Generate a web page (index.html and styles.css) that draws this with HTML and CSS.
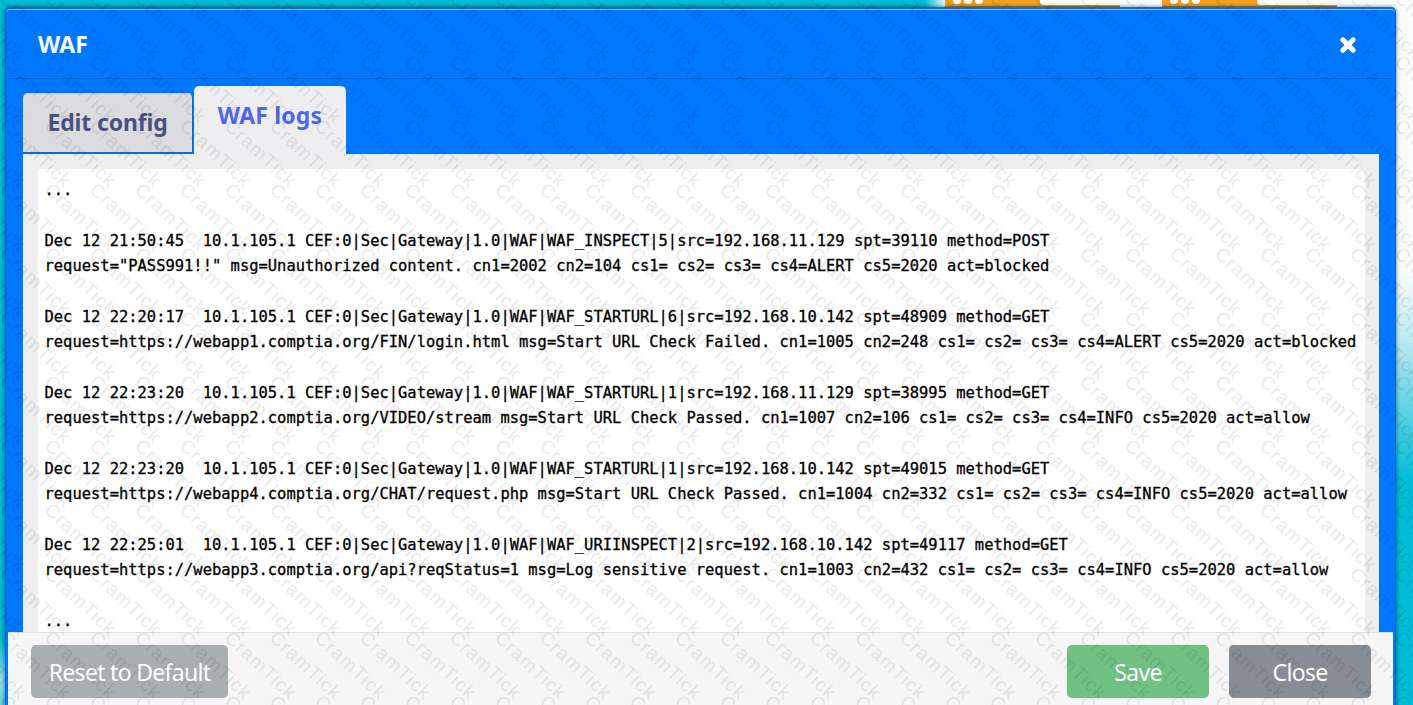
FILE: index.html
```html
<!DOCTYPE html>
<html lang="en">
<head>
<meta charset="utf-8">
<title>WAF</title>
<link rel="stylesheet" href="styles.css">
</head>
<body>
<div class="chips">
  <div class="chip"><span class="dots"><i></i><i></i><i></i></span><span class="pill"></span></div>
  <div class="chip"><span class="dots"><i></i><i></i><i></i></span><span class="pill"></span></div>
</div>
<section class="modal">
  <header class="modal-head">
    <h1 class="modal-title">WAF</h1>
    <svg class="close-x" width="18" height="18" viewBox="0 0 18 18" aria-hidden="true"><path d="M3.8 3.8 14.2 14.2M14.2 3.8 3.8 14.2" stroke="#fff" stroke-width="5" stroke-linecap="round" fill="none"/></svg>
  </header>
  <nav class="tabs">
    <div class="tab tab-off">Edit config</div>
    <div class="tab tab-on">WAF logs</div>
  </nav>
  <div class="panel">
    <pre class="log">...

Dec 12 21:50:45  10.1.105.1 CEF:0|Sec|Gateway|1.0|WAF|WAF_INSPECT|5|src=192.168.11.129 spt=39110 method=POST
request="PASS991!!" msg=Unauthorized content. cn1=2002 cn2=104 cs1= cs2= cs3= cs4=ALERT cs5=2020 act=blocked

Dec 12 22:20:17  10.1.105.1 CEF:0|Sec|Gateway|1.0|WAF|WAF_STARTURL|6|src=192.168.10.142 spt=48909 method=GET
request=https://webapp1.comptia.org/FIN/login.html msg=Start URL Check Failed. cn1=1005 cn2=248 cs1= cs2= cs3= cs4=ALERT cs5=2020 act=blocked

Dec 12 22:23:20  10.1.105.1 CEF:0|Sec|Gateway|1.0|WAF|WAF_STARTURL|1|src=192.168.11.129 spt=38995 method=GET
request=https://webapp2.comptia.org/VIDEO/stream msg=Start URL Check Passed. cn1=1007 cn2=106 cs1= cs2= cs3= cs4=INFO cs5=2020 act=allow

Dec 12 22:23:20  10.1.105.1 CEF:0|Sec|Gateway|1.0|WAF|WAF_STARTURL|1|src=192.168.10.142 spt=49015 method=GET
request=https://webapp4.comptia.org/CHAT/request.php msg=Start URL Check Passed. cn1=1004 cn2=332 cs1= cs2= cs3= cs4=INFO cs5=2020 act=allow

Dec 12 22:25:01  10.1.105.1 CEF:0|Sec|Gateway|1.0|WAF|WAF_URIINSPECT|2|src=192.168.10.142 spt=49117 method=GET
request=https://webapp3.comptia.org/api?reqStatus=1 msg=Log sensitive request. cn1=1003 cn2=432 cs1= cs2= cs3= cs4=INFO cs5=2020 act=allow

...</pre>
  </div>
  <footer class="modal-foot">
    <button class="btn btn-reset">Reset to Default</button>
    <span class="foot-gap"></span>
    <button class="btn btn-save">Save</button>
    <button class="btn btn-close">Close</button>
  </footer>
</section>
<svg class="watermark" width="1413" height="705" aria-hidden="true">
  <defs>
    <text id="wm" class="wm-text" transform="translate(-1.6 -0.7) rotate(43)">CramTick</text>
    <pattern id="wm-tile" width="45" height="64" patternUnits="userSpaceOnUse">
      <use href="#wm"/>
      <use href="#wm" transform="translate(-45 0)"/>
      <use href="#wm" transform="translate(45 0)"/>
      <use href="#wm" transform="translate(0 -64)"/>
      <use href="#wm" transform="translate(-45 -64)"/>
      <use href="#wm" transform="translate(45 -64)"/>
      <use href="#wm" transform="translate(0 64)"/>
      <use href="#wm" transform="translate(-45 64)"/>
      <use href="#wm" transform="translate(45 64)"/>
    </pattern>
  </defs>
  <rect width="1413" height="705" fill="url(#wm-tile)"/>
</svg>
</body>
</html>
```
FILE: styles.css
```css
* { box-sizing: border-box; }
html, body { margin: 0; height: 705px; overflow: hidden; }
body {
  position: relative;
  background:
    linear-gradient(to right, #00bcd6 925px, #fbfdfd 947px) left top / 100% 9px no-repeat,
    linear-gradient(to bottom, #fbfdfd 270px, #bce9f1 340px, #00bcd6 480px) right top / 18px 100% no-repeat,
    linear-gradient(to bottom, #00bcd6 640px, #8fe0ee 680px, #5fd3e8 705px) left top / 6px 100% no-repeat,
    #00bcd6;
  font-family: "Noto Sans", "Open Sans", sans-serif;
}
.chips {
  position: absolute; left: 945px; top: 0;
  display: flex; gap: 42px;
}
.chip {
  width: 175px; height: 7px;
  background: #f2a01e;
  border-bottom: 1px solid #c47a10;
  display: flex; justify-content: space-between;
  overflow: hidden;
}
.dots { display: flex; gap: 3px; padding-left: 8px; margin-top: -4px; }
.dots i { width: 8px; height: 8px; border-radius: 50%; background: #fff; display: block; }
.pill {
  width: 80px; height: 5px;
  background: #fff;
  border-bottom-left-radius: 4px;
}
.modal {
  position: absolute; left: 5px; top: 7px;
  width: 1391px; height: 720px;
  background: #0077ff;
  border: 1px solid #0066dd;
  border-top: 2px solid #0a6ed0;
  border-radius: 5px 5px 0 0;
  box-shadow: 0 0 4px rgba(0,0,0,.55), inset 0 1px 0 #8ec2ff;
  display: flex; flex-direction: column;
}
.modal-head {
  height: 70px;
  display: flex; align-items: center; justify-content: space-between;
  padding: 2px 36px 0 30px;
  margin: 0 2px;
  border-bottom: 1px solid #0062d2;
  flex: none;
}
.modal-title { margin: 0; font-size: 23px; font-weight: 700; color: #fff; line-height: 1; }
.close-x { display: block; }
.tabs {
  display: flex; align-items: flex-end; gap: 1px;
  padding-left: 17px;
  height: 75px;
  flex: none;
}
.tab { font-weight: 700; font-size: 23px; text-align: center; }
.tab-off {
  width: 170px; height: 61px;
  padding-top: 12px;
  background: #dcdce0;
  color: #4a5080;
  letter-spacing: -.15px;
  border-radius: 5px 5px 0 0;
  border-top: 1px solid #c8c8d4;
  border-bottom: 2px solid #0a6be0;
  border-right: 1px solid #0a6be0;
}
.tab-on {
  width: 152px; height: 68px;
  padding-top: 13px;
  background: #eeeef1;
  color: #4f67ee;
  letter-spacing: .15px;
  border-radius: 5px 5px 0 0;
}
.panel {
  flex: none;
  margin: 0 16px 0 17px;
  height: 500px;
  background: #eeeef1;
  padding: 15px 14px 0 15px;
}
.log {
  margin: 0;
  height: 480px;
  background: #fff;
  padding: 9px 0 0 6.5px;
  font-family: "DejaVu Sans Mono", monospace;
  font-weight: 400;
  font-size: 15.46px;
  line-height: 25.35px;
  color: #000;
  -webkit-text-stroke: .3px #000;
  overflow: hidden;
}
.modal-foot {
  position: absolute; left: 2px; right: 2px; top: 623px;
  height: 90px;
  background: #f6f6f7;
  border-top: 1px solid #dfdfe1;
  padding: 12px 22px 0 23px;
  display: flex; align-items: flex-start; gap: 20px;
}
.foot-gap { flex: 1; }
.btn {
  border: 0; border-radius: 5px; height: 53px;
  color: #fff; font-family: inherit; font-size: 23px;
  letter-spacing: -.7px;
  padding: 0;
}
.btn-reset { width: 197px; background: #a9aeb1; }
.btn-save { width: 142px; background: #70c282; }
.btn-close { width: 142px; background: #868d96; }
.watermark { position: absolute; left: 0; top: 0; pointer-events: none; }
.wm-text {
  font-family: "Liberation Sans", sans-serif;
  font-size: 19px;
  letter-spacing: 1.2px;
  fill: #000;
  fill-opacity: .085;
}
```
